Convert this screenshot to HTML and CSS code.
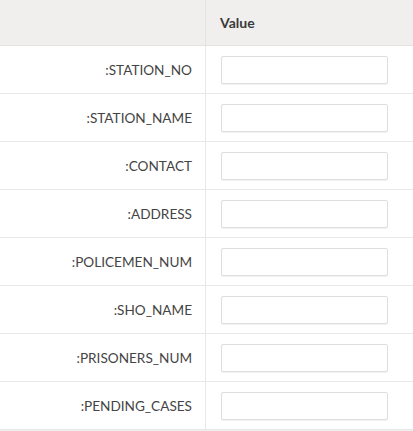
FILE: index.html
```html
<!DOCTYPE html>
<html>
<head>
<meta charset="utf-8">
<link rel="stylesheet" href="styles.css">
</head>
<body>
<table class="grid">
  <thead>
    <tr><th class="name-col"></th><th class="val-col">Value</th></tr>
  </thead>
  <tbody>
    <tr><td class="name">:STATION_NO</td><td class="val"><input class="field" type="text"></td></tr>
    <tr><td class="name">:STATION_NAME</td><td class="val"><input class="field" type="text"></td></tr>
    <tr><td class="name">:CONTACT</td><td class="val"><input class="field" type="text"></td></tr>
    <tr><td class="name">:ADDRESS</td><td class="val"><input class="field" type="text"></td></tr>
    <tr><td class="name">:POLICEMEN_NUM</td><td class="val"><input class="field" type="text"></td></tr>
    <tr><td class="name">:SHO_NAME</td><td class="val"><input class="field" type="text"></td></tr>
    <tr><td class="name">:PRISONERS_NUM</td><td class="val"><input class="field" type="text"></td></tr>
    <tr><td class="name">:PENDING_CASES</td><td class="val"><input class="field" type="text"></td></tr>
  </tbody>
</table>
<div class="footer"></div>
</body>
</html>
```
FILE: styles.css
```css
html, body {
  margin: 0;
  padding: 0;
  background: #ffffff;
}
body {
  font-family: Lato, "Liberation Sans", sans-serif;
  color: #444444;
  width: 413px;
}
.grid {
  width: 413px;
  border-collapse: collapse;
  table-layout: fixed;
}
.name-col {
  width: 205px;
}
thead th {
  background: #f0efed;
  height: 45px;
  padding: 0;
  border-bottom: 1px solid #e4e3e1;
  font-size: 14px;
  font-weight: 700;
  color: #3a3a3a;
  text-align: left;
}
thead th.name-col {
  border-right: 1px solid #e4e3e1;
}
thead th.val-col {
  padding-left: 14px;
}
tbody td {
  height: 47px;
  padding: 0;
  border-bottom: 1px solid #e8e8e8;
  font-size: 13.6px;
}
tbody td.name {
  text-align: right;
  padding-right: 13px;
  border-right: 1px solid #e8e8e8;
}
tbody td.val {
  padding-left: 15px;
}
.field {
  display: block;
  box-sizing: border-box;
  width: 167px;
  height: 28px;
  margin: 0;
  border: 1px solid #dedede;
  border-radius: 2px;
  background: #fff;
  box-shadow: 0 1px 1px rgba(0,0,0,0.06);
  outline: none;
}
.footer {
  height: 3px;
  background: #f0efed;
}
```
